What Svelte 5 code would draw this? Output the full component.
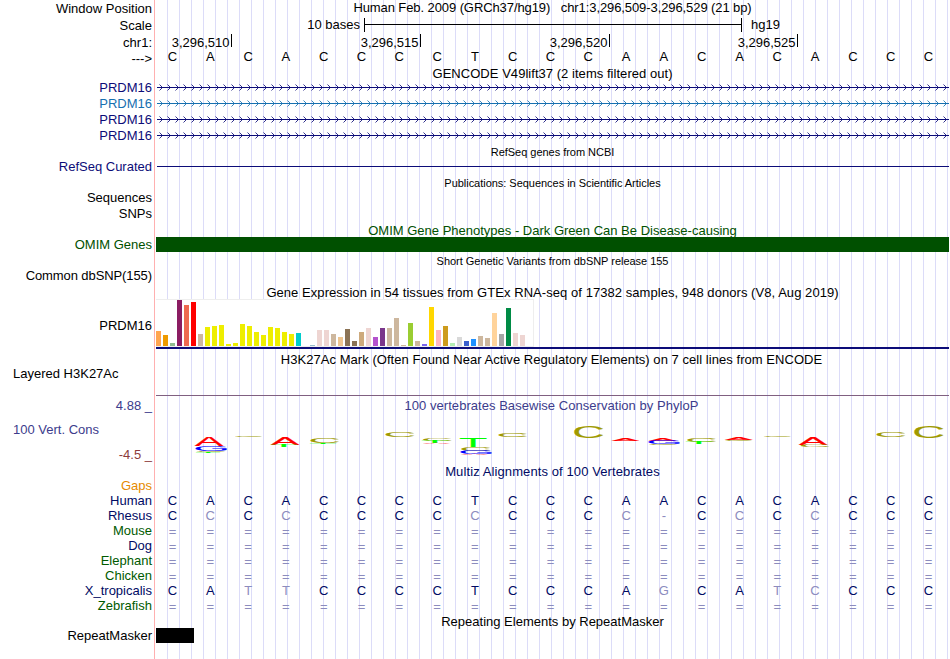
<script>
    const sequence = "CACACCCCTCCCAACACACCC".split("");

    const positions = [
        { label: "3,296,510", width: 76 },
        { label: "3,296,515", width: 189 },
        { label: "3,296,520", width: 189 },
        { label: "3,296,525", width: 188 }
    ];

    const genes = ["navy", "blue", "navy", "navy"];
    const arrows = Array.from({ length: 99 }, (_, i) => 6.5 + i * 8);

    // GTEx tissues: [height, colour]
    const tissues = [
        [15, "#ffa54f"], [11, "#ee9a00"], [3, "#8fbc8f"], [46, "#8b1c62"], [41, "#ee6a50"], [44, "#ff0000"],
        [12, "#cdb79e"], [19, "#eeee00"], [20, "#eeee00"], [21, "#eeee00"], [2, "#eeee00"], [3, "#eeee00"],
        [22, "#eeee00"], [20, "#eeee00"], [14, "#eeee00"], [11, "#eeee00"], [19, "#eeee00"], [18, "#eeee00"],
        [14, "#eeee00"], [12, "#eeee00"], [13, "#00cdcd"], [0, "#ee82ee"], [1, "#9ac0cd"], [16, "#eed5d2"],
        [16, "#eed5d2"], [12, "#cdb79e"], [9, "#eec591"], [17, "#8b7355"], [5, "#8b7355"], [14, "#cdaa7d"],
        [18, "#eed5d2"], [9, "#b452cd"], [18, "#7a378b"], [18, "#cdb79e"], [28, "#cdb79e"], [1, "#cdb79e"],
        [23, "#9acd32"], [5, "#cdb79e"], [2, "#7a67ee"], [39, "#ffd700"], [16, "#ffb6c1"], [20, "#cd9b1d"],
        [3, "#b4eeb4"], [9, "#d9d9d9"], [5, "#3a5fcd"], [7, "#1e90ff"], [10, "#cdb79e"], [8, "#cdb79e"],
        [33, "#ffd39b"], [12, "#a6a6a6"], [38, "#008b45"], [13, "#eed5d2"], [11, "#eed5d2"], [0, "#ff00ff"]
    ];

    // conservation logo: [base, left, top, width, height], origin at the track corner
    const logo = [
        ["A", 39, 24.7, 28.3, 8.3], ["G", 40, 33, 31, 4.7], ["C", 40.5, 37.7, 28.5, 1.3], ["T", 40, 39, 24, 1],
        ["C", 79, 23.2, 27, 0.9],
        ["A", 115, 24.7, 28.3, 7.3], ["T", 115, 32, 26, 2],
        ["C", 154.3, 24.7, 28.3, 5], ["T", 154, 29.7, 26, 1.3],
        ["C", 229.3, 18.7, 28.7, 5],
        ["C", 266.7, 25, 28.6, 3], ["T", 266, 28, 26, 2], ["A", 267, 30, 27, 1],
        ["T", 304, 25.7, 26.5, 8.3], ["C", 305, 34, 29, 3.7], ["G", 305, 37.7, 31, 3.5], ["A", 305, 41, 27, 0.8],
        ["C", 342.3, 19.7, 28.4, 4.3],
        ["C", 418, 13.7, 28.7, 11.3],
        ["A", 455.7, 25, 27.6, 2.7],
        ["A", 493, 25, 27.7, 2.7], ["G", 493, 27.7, 31, 3.3], ["C", 493, 31, 28, 0.8],
        ["C", 531, 25, 28.7, 4], ["T", 530, 29, 26, 2],
        ["A", 569, 25, 27.7, 2.3], ["C", 569, 27.2, 27, 0.6],
        ["C", 607.7, 23.1, 27.6, 0.9],
        ["A", 643, 24.7, 28.3, 7.3], ["C", 644.5, 32, 28.5, 2],
        ["C", 720.3, 19, 28.7, 5],
        ["C", 758, 13.7, 29, 11.3]
    ];
    const inkWidth = { A: 66, C: 64, G: 66, T: 57 };
    const baseColor = { A: "#ff0000", C: "#a09a00", G: "#0000ff", T: "#00ff00" };

    // lower case marks a mismatch with the reference
    const none = "=".repeat(21);
    const species = [
        { name: "Human", color: "align", bases: "CACACCCCTCCCAACACACCC" },
        { name: "Rhesus", color: "align", bases: "CcCcCCCCcCCCc-CcCcCCC" },
        { name: "Mouse", color: "green", bases: none },
        { name: "Dog", color: "align", bases: none },
        { name: "Elephant", color: "green", bases: none },
        { name: "Chicken", color: "green", bases: none },
        { name: "X_tropicalis", color: "align", bases: "CAttCCCCTCCCAgCAtcCCC" },
        { name: "Zebrafish", color: "green", bases: none }
    ];
    const isFaint = (b) => b !== b.toUpperCase() || b === "=" || b === "-";
</script>

<div class="browser">
    <div class="row h16">
        <div class="label down">Window Position</div>
        <div class="title tight">Human Feb. 2009 (GRCh37/hg19) &nbsp; chr1:3,296,509-3,296,529 (21 bp)</div>
    </div>
    <div class="row h17">
        <div class="label down">Scale</div>
        <div class="track scale">
            <span class="bases-text">10 bases</span>
            <span class="ruler"><i></i></span>
            <span>hg19</span>
        </div>
    </div>
    <div class="row h17">
        <div class="label down">chr1:</div>
        <div class="track ticks">
            {#each positions as pos}
                <span class="tick" style="width: {pos.width}px">{pos.label}</span>
            {/each}
        </div>
    </div>
    <div class="row h16">
        <div class="label down">---&gt;</div>
        <div class="letters top">
            {#each sequence as base}<span>{base}</span>{/each}
        </div>
    </div>
    <div class="row h14">
        <div class="label"></div>
        <div class="title down loose">GENCODE V49lift37 (2 items filtered out)</div>
    </div>
    {#each genes as color}
        <div class="row h16">
            <div class="label {color}">PRDM16</div>
            <svg class="gene {color}" width="793" height="16">
                <path d="M1 7.5H793" />
                {#each arrows as x}
                    <path class="arrow" d="M{x - 3} 4.5l3 3l-3 3" />
                {/each}
            </svg>
        </div>
    {/each}
    <div class="row h15">
        <div class="label"></div>
        <div class="title small down">RefSeq genes from NCBI</div>
    </div>
    <div class="row h16">
        <div class="label navy">RefSeq Curated</div>
        <svg class="gene navy" width="793" height="16"><path d="M1 7.5H793" /></svg>
    </div>
    <div class="row h15">
        <div class="label"></div>
        <div class="title small down">Publications: Sequences in Scientific Articles</div>
    </div>
    <div class="row h16"><div class="label">Sequences</div></div>
    <div class="row h16"><div class="label">SNPs</div></div>
    <div class="row h15">
        <div class="label"></div>
        <div class="title omim down">OMIM Gene Phenotypes - Dark Green Can Be Disease-causing</div>
    </div>
    <div class="row h15">
        <div class="label omim">OMIM Genes</div>
        <div class="track omim-bar"></div>
    </div>
    <div class="row h16">
        <div class="label"></div>
        <div class="title small down">Short Genetic Variants from dbSNP release 155</div>
    </div>
    <div class="row h15"><div class="label tight">Common dbSNP(155)</div></div>
    <div class="row h16">
        <div class="label"></div>
        <div class="title gtex-title">Gene Expression in 54 tissues from GTEx RNA-seq of 17382 samples, 948 donors (V8, Aug 2019)</div>
    </div>
    <div class="row gtex">
        <div class="label">PRDM16</div>
        <div class="track expression">
            <div class="bars">
                {#each tissues as [height, color]}
                    <i style="height: {height}px; background: {color}"></i>
                {/each}
            </div>
        </div>
    </div>
    <div class="row h17 h3k-title">
        <div class="label"></div>
        <div class="title">H3K27Ac Mark (Often Found Near Active Regulatory Elements) on 7 cell lines from ENCODE</div>
    </div>
    <div class="row h3k">
        <div class="label left">Layered H3K27Ac</div>
        <div class="track baseline"></div>
    </div>
    <div class="row h17">
        <div class="label phylo down">4.88 _</div>
        <div class="title phylo down phylo-title">100 vertebrates Basewise Conservation by PhyloP</div>
    </div>
    <div class="row cons">
        <div class="label cons-labels">
            <span class="left phylo">100 Vert. Cons</span>
            <span class="minimum">-4.5 _</span>
        </div>
        <svg class="logo" width="793" height="49">
            {#each logo as [base, x, y, w, h]}
                <text
                    text-anchor="middle"
                    fill={baseColor[base]}
                    stroke={baseColor[base]}
                    transform="translate({x + w / 2} {y + h}) scale({w / inkWidth[base]} {h / 70})">{base}</text>
            {/each}
        </svg>
    </div>
    <div class="row h16">
        <div class="label"></div>
        <div class="title align multiz">Multiz Alignments of 100 Vertebrates</div>
    </div>
    <div class="row h15"><div class="label gaps">Gaps</div></div>
    {#each species as s}
        <div class="row h15">
            <div class="label {s.color}">{s.name}</div>
            <div class="letters align">
                {#each s.bases.split("") as b}
                    <span class:faint={isFaint(b)} class:down={b === "="}>{b.toUpperCase()}</span>
                {/each}
            </div>
        </div>
    {/each}
    <div class="row h15">
        <div class="label"></div>
        <div class="title down">Repeating Elements by RepeatMasker</div>
    </div>
    <div class="row h15">
        <div class="label">RepeatMasker</div>
        <div class="repeat"></div>
    </div>
</div>

<style>
    :global(body) {
        margin: 0;
        background: #fff;
    }
    .browser {
        width: 950px;
        height: 659px;
        overflow: hidden;
        font-family: "Liberation Sans", Arial, sans-serif;
        font-size: 13px;
        color: #000;
        /* guide lines every 12px, red divider after the labels */
        background:
            linear-gradient(#ffb0b0, #ffb0b0) 154px 0 / 1px 100% no-repeat,
            repeating-linear-gradient(to right, #dcdcf8 0 1px, transparent 1px 12px) 167px 0 / 783px 100% no-repeat,
            #fff;
    }
    .row {
        display: flex;
        white-space: pre;
    }
    .h14 { height: 14px; line-height: 14px; }
    .h15 { height: 15px; line-height: 15px; }
    .h16 { height: 16px; line-height: 16px; }
    .h17 { height: 17px; line-height: 17px; }

    .label {
        width: 152px;
        margin-right: 4px;
        flex: none;
        text-align: right;
    }
    .title, .track {
        width: 793px;
        flex: none;
    }
    .title {
        text-align: center;
    }
    .small {
        font-size: 11px;
        letter-spacing: -0.03px;
    }
    .down {
        padding-top: 1px;
    }
    .tight {
        letter-spacing: -0.09px;
    }
    .loose {
        letter-spacing: 0.04px;
    }
    .gtex-title {
        padding-top: 2px;
        letter-spacing: 0.055px;
    }
    .h3k-title .title {
        letter-spacing: 0.045px;
        margin-left: -1px;
    }
    .phylo-title {
        letter-spacing: 0.04px;
        margin-left: -1px;
    }
    .multiz {
        padding-top: 2px;
        letter-spacing: 0.1px;
    }

    .navy { color: #0c0c78; }
    .blue { color: #1670b0; }
    .green { color: #005a00; }
    .omim { color: #005000; }
    .phylo { color: #3c3c8c; }
    .align { color: #000a64; }
    .gaps { color: #e68a00; }
    .minimum { color: #8c3c3c; }

    .scale {
        display: flex;
    }
    .bases-text {
        width: 204px;
        text-align: right;
    }
    .ruler {
        width: 376px;
        height: 14px;
        margin: 2px 9px 0 4px;
        border: solid #000;
        border-width: 0 1px;
    }
    .ruler i {
        display: block;
        height: 6px;
        border-bottom: 1px solid #000;
    }
    .ticks {
        display: flex;
    }
    .tick {
        box-sizing: border-box;
        height: 13px;
        margin-top: 1px;
        padding-right: 1.5px;
        border-right: 1px solid #000;
        line-height: 18px;
        text-align: right;
    }
    .letters {
        display: grid;
        grid-template-columns: repeat(21, 37.8px);
        margin-left: -2.4px;
        text-align: center;
    }
    .top {
        line-height: 13px;
    }
    .faint {
        color: #8c8cbe;
    }
    .gene path {
        fill: none;
        stroke: currentColor;
    }
    .gene .arrow {
        stroke-width: 0.85;
    }
    .omim-bar {
        background: #005000;
    }

    .gtex {
        height: 50px;
        line-height: 53px;
    }
    .expression {
        box-sizing: border-box;
        border-bottom: 2px solid #0c0c78;
    }
    .bars {
        box-sizing: border-box;
        display: flex;
        align-items: flex-end;
        gap: 2px;
        width: 378px;
        height: 48px;
        background: #fff;
        border: solid #eee;
        border-width: 1px 1px 1px 0;
    }
    .bars i {
        width: 5px;
        flex: none;
    }
    .h3k-title {
        line-height: 21px;
    }
    .h3k {
        height: 30px;
        line-height: 15px;
    }
    .left {
        box-sizing: border-box;
        padding-left: 13px;
        text-align: left;
    }
    .baseline {
        box-sizing: border-box;
        border-bottom: 1px solid #806080;
    }
    .cons {
        height: 49px;
    }
    .cons-labels {
        display: flex;
        flex-direction: column;
        justify-content: space-between;
        height: 40px;
        padding-top: 9px;
        line-height: 15px;
    }
    .logo {
        overflow: visible;
        font-size: 100px;
    }
    .logo text {
        stroke-width: 0.3px;
        vector-effect: non-scaling-stroke;
    }
    .repeat {
        width: 38px;
        background: #000;
    }
</style>
